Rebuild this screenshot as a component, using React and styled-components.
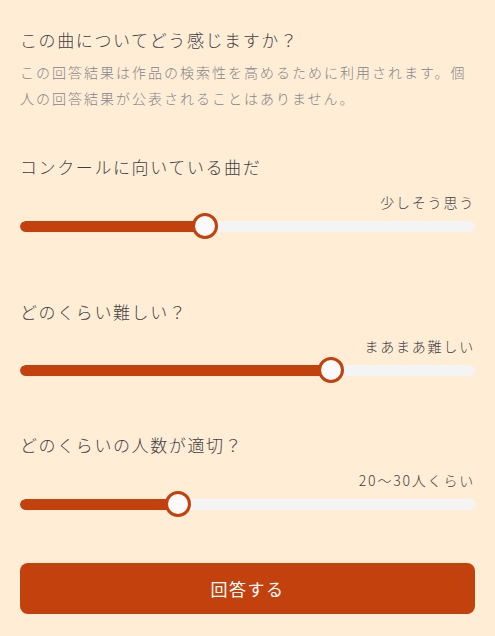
import styled, { createGlobalStyle } from "styled-components";

const GlobalStyle = createGlobalStyle`
  html, body {
    margin: 0;
    padding: 0;
    background-color: #ffedd5;
  }
  body {
    font-family: "Noto Sans CJK JP", "Noto Sans", sans-serif;
    font-weight: 300;
    color: #3f3f46;
  }
`;

const Page = styled.div`
  padding: 27px 20px 20px;
  display: flex;
  flex-direction: column;
`;

const Title = styled.h2`
  margin: 0;
  font-size: 17px;
  line-height: 26px;
  font-weight: 300;
  letter-spacing: 1.6px;
  color: #3f3f46;
`;

const Description = styled.p`
  margin: 6px 0 0;
  font-size: 14px;
  line-height: 26px;
  letter-spacing: 2px;
  color: #85858c;
`;

const Section = styled.section`
  margin-top: ${(p) => p.$top}px;
  display: flex;
  flex-direction: column;
`;

const Question = styled.div`
  font-size: 17px;
  line-height: 26px;
  letter-spacing: 1.6px;
  color: #3f3f46;
`;

const ValueLabel = styled.div`
  margin-top: ${(p) => p.$top}px;
  text-align: right;
  font-size: 14px;
  line-height: 22px;
  letter-spacing: 1.8px;
  color: #3f3f46;
`;

const SliderBox = styled.div`
  position: relative;
  height: 26px;
  display: flex;
  align-items: center;
`;

const Track = styled.div`
  position: relative;
  width: 100%;
  height: 11px;
  border-radius: 999px;
  background-color: #f4f4f5;
  overflow: hidden;
`;

const Fill = styled.div`
  height: 100%;
  border-radius: 999px;
  background-color: #c2410c;
`;

const Thumb = styled.div`
  position: absolute;
  top: 0;
  width: 26px;
  height: 26px;
  box-sizing: border-box;
  border-radius: 50%;
  border: 3px solid #c2410c;
  background-color: #fafafa;
  transform: translateX(-50%);
`;

const SubmitButton = styled.button`
  margin-top: ${(p) => p.$top}px;
  height: 51px;
  width: 100%;
  border: none;
  border-radius: 8px;
  background-color: #c2410c;
  color: #ffffff;
  font-family: inherit;
  font-size: 17px;
  font-weight: 400;
  letter-spacing: 1.5px;
  cursor: pointer;
`;

const TRACK_WIDTH = 455;
const THUMB = 26;

function Slider({ ratio }) {
  const center = THUMB / 2 + ratio * (TRACK_WIDTH - THUMB);
  return (
    <SliderBox>
      <Track>
        <Fill style={{ width: `${center}px` }} />
      </Track>
      <Thumb style={{ left: `${center}px` }} />
    </SliderBox>
  );
}

const questions = [
  { label: "コンクールに向いている曲だ", value: "少しそう思う", ratio: 0.402, top: 43, gap: 11 },
  { label: "どのくらい難しい？", value: "まあまあ難しい", ratio: 0.695, top: 60, gap: 10 },
  { label: "どのくらいの人数が適切？", value: "20〜30人くらい", ratio: 0.339, top: 49, gap: 11 },
];

export default function App() {
  return (
    <>
      <GlobalStyle />
      <Page>
        <Title>この曲についてどう感じますか？</Title>
        <Description>
          この回答結果は作品の検索性を高めるために利用されます。個人の回答結果が公表されることはありません。
        </Description>
        {questions.map((q) => (
          <Section key={q.label} $top={q.top}>
            <Question>{q.label}</Question>
            <ValueLabel $top={q.gap}>{q.value}</ValueLabel>
            <Slider ratio={q.ratio} />
          </Section>
        ))}
        <SubmitButton $top={46}>回答する</SubmitButton>
      </Page>
    </>
  );
}
